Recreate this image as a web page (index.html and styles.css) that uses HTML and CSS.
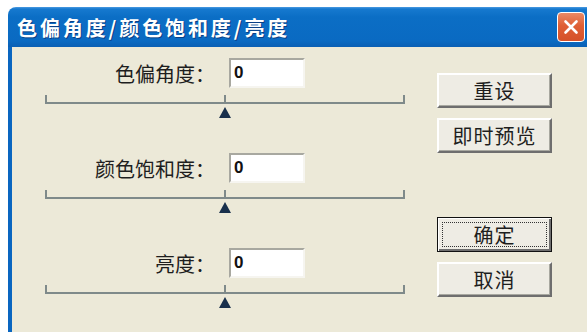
FILE: index.html
```html
<!DOCTYPE html>
<html lang="zh-CN">
<head>
    <meta charset="UTF-8">
    <title>色偏角度/颜色饱和度/亮度</title>
    <link rel="stylesheet" href="styles.css">
</head>
<body>
    <div class="window">
        <div class="titlebar">
            <span class="title">色偏角度/颜色饱和度/亮度</span>
            <button class="close" title="关闭">
                <svg width="16" height="16" viewBox="0 0 16 16">
                    <path d="M2.5 2.5 L13.5 13.5 M13.5 2.5 L2.5 13.5" stroke="#fff" stroke-width="2.6" stroke-linecap="round"/>
                </svg>
            </button>
        </div>
        <div class="content">
            <div class="sliders">
                <div class="group">
                    <div class="row">
                        <label class="label">色偏角度：</label>
                        <input class="field" type="text" value="0">
                    </div>
                    <div class="track"></div>
                    <div class="thumb"></div>
                </div>
                <div class="group">
                    <div class="row">
                        <label class="label">颜色饱和度：</label>
                        <input class="field" type="text" value="0">
                    </div>
                    <div class="track"></div>
                    <div class="thumb"></div>
                </div>
                <div class="group">
                    <div class="row">
                        <label class="label">亮度：</label>
                        <input class="field" type="text" value="0">
                    </div>
                    <div class="track"></div>
                    <div class="thumb"></div>
                </div>
            </div>
            <div class="buttons">
                <button class="btn">重设</button>
                <button class="btn">即时预览</button>
                <button class="btn default gap">确定</button>
                <button class="btn">取消</button>
            </div>
        </div>
    </div>
</body>
</html>
```

FILE: styles.css
```css
body {
    margin: 0;
    background: #fff;
    font-family: "Noto Sans CJK SC", "Liberation Sans", sans-serif;
    overflow: hidden;
}

.window {
    margin: 7px 0 0 8px;
    height: 325px;
    display: flex;
    flex-direction: column;
}

.titlebar {
    flex-shrink: 0;
    height: 40px;
    display: flex;
    align-items: center;
    justify-content: space-between;
    background: linear-gradient(#4b9be2 0, #1679cf 2px, #0b6ec5 10px, #0a6ac2 34px, #0a5fb4 40px);
    border-top-left-radius: 8px;
}

.title {
    padding-left: 9px;
    color: #fff;
    font-size: 20px;
    font-weight: bold;
    letter-spacing: 2.9px;
    text-shadow: 1px 1px 0 #0a3f86;
}

.close {
    width: 28px;
    height: 30px;
    margin-right: 2px;
    padding: 0;
    display: flex;
    align-items: center;
    justify-content: center;
    background: linear-gradient(#ea8a66, #df5f35 45%, #d5512a);
    border: 1px solid #fff;
    border-radius: 4px;
}

.content {
    flex: 1;
    min-height: 0;
    display: flex;
    background: #ece9d8;
    border-left: 4px solid #0a66c0;
}

.sliders {
    width: 425px;
    padding-top: 11px;
}

.group {
    height: 95px;
}

.row {
    display: flex;
    align-items: center;
    height: 30px;
}

.label {
    width: 203px;
    text-align: right;
    font-size: 20px;
    color: #1e1e1e;
}

.field {
    box-sizing: border-box;
    width: 76px;
    height: 30px;
    margin-left: 14px;
    padding: 0 0 0 3px;
    font-family: "Liberation Sans", sans-serif;
    font-size: 17px;
    font-weight: bold;
    color: #111;
    background: #fff;
    border: 2px solid;
    border-color: #a8a8a0 #f6f5f0 #f6f5f0 #a8a8a0;
    outline: none;
}

.track {
    position: relative;
    box-sizing: border-box;
    width: 360px;
    height: 9px;
    margin: 7px 0 0 33px;
    border: 2px solid #7f8a8a;
    border-top: 0;
}

.track::before {
    content: "";
    position: absolute;
    left: 177px;
    top: 0;
    width: 2px;
    height: 7px;
    background: #7f8a8a;
}

.thumb {
    width: 0;
    height: 0;
    margin: 3px 0 0 207px;
    border-left: 6px solid transparent;
    border-right: 6px solid transparent;
    border-bottom: 11px solid #18304c;
}

.buttons {
    width: 115px;
    padding-top: 26px;
    display: flex;
    flex-direction: column;
    gap: 10px;
}

.btn {
    box-sizing: border-box;
    height: 35px;
    padding: 0;
    font-family: "Noto Sans CJK SC", sans-serif;
    font-size: 20px;
    letter-spacing: 1px;
    color: #1e1e1e;
    background: #eeece4;
    border: 2px solid;
    border-color: #fff #6e6e6e #6e6e6e #fff;
    box-shadow: inset -1px -1px 0 #a8a8a0;
}

.btn.gap {
    margin-top: 54px;
}

.btn.default {
    position: relative;
    border: 1px solid #111;
    box-shadow: inset 1px 1px 0 #fff, inset -2px -2px 0 #6e6e6e;
}

.btn.default::after {
    content: "";
    position: absolute;
    inset: 4px;
    border: 1px dotted #333;
}
```
